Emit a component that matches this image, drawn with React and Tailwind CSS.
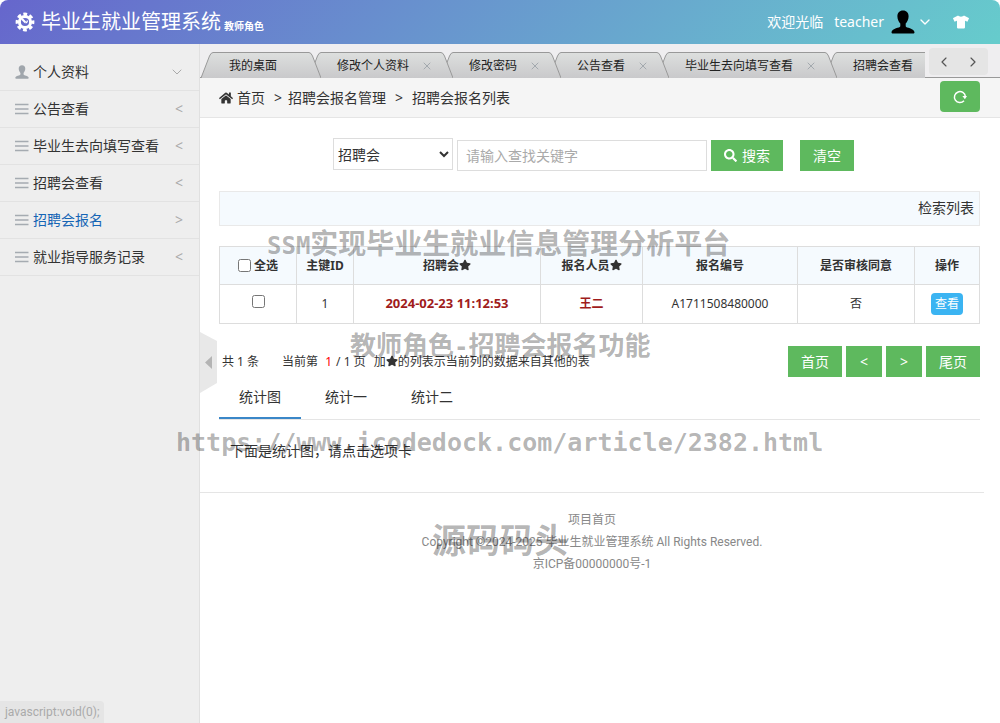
import React, { useState } from 'react';
import { FaHome, FaSearch, FaStar, FaTshirt } from 'react-icons/fa';
import { ChevronDown, ChevronLeft, ChevronRight, X } from 'lucide-react';

const MENU = ['公告查看', '毕业生去向填写查看', '招聘会查看', '招聘会报名', '就业指导服务记录'];
const TABS = ['我的桌面', '修改个人资料', '修改密码', '公告查看', '毕业生去向填写查看', '招聘会查看'];
const CHARTS = ['统计图', '统计一', '统计二'];

function GearIcon() {
  return (
    <svg width="20" height="20" viewBox="0 0 20 20" fill="none" stroke="white">
      <circle cx="10" cy="10" r="5.6" strokeWidth="3" />
      <circle cx="10" cy="10" r="7.800" strokeWidth="3.200" strokeDasharray="3.700 2.426" strokeDashoffset="1.850" />
      <path d="M6.800 6.800l3.700 3.700" strokeWidth="2" />
      <path d="M10.500 10.800a2 2 0 0 0 1.800-2.300" strokeWidth="1.300" />
    </svg>
  );
}

function PersonIcon({ className }) {
  return (
    <svg className={className} viewBox="0 0 24 24" fill="currentColor">
      <path d="M12 .5c-3.600 0-5.700 2.500-5.600 6 .1 3.200 1.400 5.300 2.900 7v2.800C8.800 18.200 1.300 18 .5 22c0 1 .5 1.500 1.500 1.500h20c1 0 1.500-.5 1.500-1.500-.8-4-8.300-3.800-8.800-5.700v-2.800c1.500-1.700 2.800-3.800 2.900-7C17.700 3 15.600.5 12 .5z" />
    </svg>
  );
}

function ListIcon() {
  return (
    <svg width="14" height="14" viewBox="0 0 14 14" stroke="#a5abb1" strokeWidth="1.500">
      <path d="M0 2.500h13.500M0 7h13.500M0 11.500h13.500" />
    </svg>
  );
}

function ReloadIcon() {
  return (
    <svg width="14" height="14" viewBox="0 0 14 14" fill="none" stroke="white" strokeWidth="1.500">
      <path d="M11 10.800A5.500 5.500 0 1 1 12.400 6.600" />
      <path d="M9.400 6h4.600l-2.100 3.200z" fill="white" stroke="none" />
    </svg>
  );
}

function Star() {
  return <FaStar className="inline size-3 align-[-1px]" />;
}

function PageTab({ label, closable, order }) {
  return (
    <li className="relative -ml-3 flex h-[26px] shrink-0 first:ml-0" style={{ zIndex: order }}>
      <svg width="12" height="26" viewBox="0 0 12 26">
        <path d="M0 26L8.500 4Q10 .5 12 .5V26z" fill="url(#tabFill)" />
        <path d="M0 26L8.500 4Q10 .5 12 .5" fill="none" stroke="#999" />
      </svg>
      <div className="flex items-center border-t border-[#999] bg-linear-to-b from-[#dddfde] to-[#c9c9cb] pl-4 text-xs text-[#222]">
        <span className="whitespace-nowrap">{label}</span>
        {closable ? (
          <button type="button" aria-label="关闭" className="mr-2 ml-3 text-[#a3a9ae]"><X size={12} strokeWidth={2} /></button>
        ) : (
          <span className="w-8" />
        )}
      </div>
      <svg width="12" height="26" viewBox="0 0 12 26">
        <path d="M0 .5Q2 .5 3.500 4L12 26H0z" fill="url(#tabFill)" />
        <path d="M0 .5Q2 .5 3.500 4L12 26" fill="none" stroke="#999" />
      </svg>
    </li>
  );
}

function Header() {
  return (
    <header className="flex h-11 items-center rounded-t-lg bg-linear-135 from-[#6666cc] to-[#66cccc] pr-[31px] pl-[15px] text-white">
      <GearIcon />
      <h1 className="ml-[6px] text-xl">毕业生就业管理系统</h1>
      <span className="mt-2 ml-[3px] text-[10px] font-bold">教师角色</span>
      <div className="ml-auto flex items-center text-sm">
        <span>欢迎光临</span>
        <a href="#user" className="ml-[11px] flex items-center">
          teacher
          <PersonIcon className="ml-[7px] size-6 text-black" />
          <ChevronDown size={16} strokeWidth={2} className="ml-[2px]" />
        </a>
        <a href="#skin" aria-label="换肤" className="ml-5"><FaTshirt size={16} /></a>
      </div>
    </header>
  );
}

function Sidebar() {
  return (
    <aside className="w-[200px] shrink-0 rounded-bl-lg border-r border-[#e0e0e0] bg-[#eee] pt-[10px] text-sm text-[#333]">
      <a href="#profile" className="flex h-[37px] items-center border-b border-[#e2e2e2] pr-[14px] pl-[15px]">
        <PersonIcon className="size-[14px] text-[#a0a6ac]" />
        <span className="ml-1">个人资料</span>
        <ChevronDown size={16} strokeWidth={1.5} className="ml-auto text-[#aaa]" />
      </a>
      {MENU.map((item) => (
        <a
          key={item}
          href="#menu"
          className={`flex h-[37px] items-center border-b border-[#e2e2e2] pr-4 pl-[15px] ${item === '招聘会报名' ? 'text-[#1565b5]' : ''}`}
        >
          <ListIcon />
          <span className="ml-1">{item}</span>
          <span className="ml-auto text-[#aaa]">{item === '招聘会报名' ? '>' : '<'}</span>
        </a>
      ))}
    </aside>
  );
}

function PageTabs() {
  return (
    <nav className="flex h-[34px] border-b border-[#999] bg-[#efeef0]">
      <ul className="mt-2 ml-px flex h-[26px] min-w-0 flex-1 overflow-hidden">
        {TABS.map((label, i) => (
          <PageTab key={label} label={label} closable={i > 0} order={TABS.length - i} />
        ))}
      </ul>
      <div className="mt-1 mr-3 ml-1 flex h-[27px] w-[59px] shrink-0 items-center justify-around rounded-sm bg-[#e5e5e5] text-[#555]">
        <button type="button" aria-label="向左"><ChevronLeft size={16} strokeWidth={1.75} /></button>
        <button type="button" aria-label="向右"><ChevronRight size={16} strokeWidth={1.75} /></button>
      </div>
    </nav>
  );
}

function Breadcrumb() {
  return (
    <div className="flex h-10 items-center border-b border-[#e5e5e5] bg-[#f5f5f5] pr-5 pl-[19px] text-sm">
      <FaHome size={14} />
      <a href="#home" className="ml-1">首页</a>
      <span className="mx-[6px] ml-[9px]">&gt;</span>
      <span>招聘会报名管理</span>
      <span className="mx-[9px]">&gt;</span>
      <span>招聘会报名列表</span>
      <button type="button" aria-label="刷新" className="mb-[2px] ml-auto flex h-[31px] w-10 items-center justify-center rounded bg-[#5eb95e]">
        <ReloadIcon />
      </button>
    </div>
  );
}

function GreenButton({ children, small }) {
  return (
    <button type="button" className={`flex h-[31px] items-center justify-center bg-[#5eb95e] text-sm text-white ${small ? 'w-9' : 'px-[13px]'}`}>
      {children}
    </button>
  );
}

function SearchBar() {
  const [keyword, setKeyword] = useState('');
  return (
    <form className="flex items-end justify-center pr-3" onSubmit={(e) => e.preventDefault()}>
      <select aria-label="查询字段" className="mb-px h-8 w-[120px] border border-[#ddd] bg-white text-sm">
        <option>招聘会</option>
      </select>
      <input
        type="text"
        aria-label="关键字"
        placeholder="请输入查找关键字"
        value={keyword}
        onChange={(e) => setKeyword(e.target.value)}
        className="mr-1 ml-1 h-[31px] w-[250px] border border-[#ddd] px-2 text-sm placeholder:text-[#aaa]"
      />
      <GreenButton><FaSearch size={13} className="mr-[5px]" />搜索</GreenButton>
      <div className="ml-[17px]"><GreenButton>清空</GreenButton></div>
    </form>
  );
}

function ResultTable() {
  return (
    <table className="mt-5 w-full table-fixed text-center text-xs [&_td]:border [&_td]:border-[#ddd] [&_th]:border [&_th]:border-[#ddd]">
      <colgroup>
        <col className="w-[77px]" />
        <col className="w-[57px]" />
        <col />
        <col className="w-[102px]" />
        <col className="w-[155px]" />
        <col className="w-[117px]" />
        <col className="w-[65px]" />
      </colgroup>
      <thead>
        <tr className="h-[38px] bg-[#f5fafe]">
          <th>
            <label className="flex items-center justify-center gap-[3px]"><input type="checkbox" className="size-[13px]" />全选</label>
          </th>
          <th>主键ID</th>
          <th>招聘会<Star /></th>
          <th>报名人员<Star /></th>
          <th>报名编号</th>
          <th>是否审核同意</th>
          <th>操作</th>
        </tr>
      </thead>
      <tbody>
        <tr className="h-[39px]">
          <td><input type="checkbox" aria-label="选择" className="mb-[6px] size-[13px] align-middle" /></td>
          <td>1</td>
          <td className="text-[13px] font-bold text-[#a01c1c]">2024-02-23 11:12:53</td>
          <td className="font-bold text-[#a01c1c]">王二</td>
          <td>A1711508480000</td>
          <td>否</td>
          <td><button type="button" className="h-[22px] rounded bg-[#3bb4f2] px-1 align-middle text-white">查看</button></td>
        </tr>
      </tbody>
    </table>
  );
}

function Pager() {
  return (
    <div className="mt-[22px] flex h-[31px] items-center text-xs">
      <span className="ml-[3px]">共 1 条</span>
      <span className="ml-[23px]">当前第 <span className="mx-1 text-[#f00]">1</span>/ 1 页</span>
      <span className="ml-2">加<Star />的列表示当前列的数据来自其他的表</span>
      <div className="ml-auto flex gap-1">
        <GreenButton>首页</GreenButton>
        <GreenButton small>&lt;</GreenButton>
        <GreenButton small>&gt;</GreenButton>
        <GreenButton>尾页</GreenButton>
      </div>
    </div>
  );
}

function ChartTabs() {
  const [active, setActive] = useState(0);
  return (
    <section>
      <div className="flex h-[43px] gap-1 border-b border-[#e5e5e5] text-sm">
        {CHARTS.map((name, i) => (
          <button
            key={name}
            type="button"
            onClick={() => setActive(i)}
            className={`border-b-2 px-5 ${i === active ? 'border-[#3a87c8]' : 'border-transparent'}`}
          >
            {name}
          </button>
        ))}
      </div>
      <p className="px-[11px] pt-[21px] text-sm">下面是统计图，请点击选项卡</p>
    </section>
  );
}

function Watermark() {
  return (
    <div className="pointer-events-none absolute inset-x-0 top-0 z-20 font-bold text-black/30">
      <p className="absolute top-[222px] left-[267px] text-[28px] leading-[42px] whitespace-nowrap">
        <span className="font-['DejaVu_Sans_Mono'] text-2xl">SSM</span>实现毕业生就业信息管理分析平台
      </p>
      <p className="absolute top-[325px] left-[350px] text-[26px] leading-[40px] whitespace-nowrap">
        教师角色<span className="font-['DejaVu_Sans_Mono'] text-2xl">-</span>招聘会报名功能
      </p>
      <p className="absolute top-[423px] left-[176px] font-['DejaVu_Sans_Mono'] text-[25px] leading-[40px] whitespace-nowrap">
        https://www.icodedock.com/article/2382.html
      </p>
      <p className="absolute top-[515px] left-[432px] text-[34px] leading-[50px] whitespace-nowrap">源码码头</p>
    </div>
  );
}

export default function App() {
  return (
    <div className="relative flex min-h-screen flex-col bg-white font-['Noto_Sans','Noto_Sans_CJK_SC',sans-serif] text-[#333]">
      <svg width="0" height="0" className="absolute">
        <linearGradient id="tabFill" x1="0" y1="0" x2="0" y2="1">
          <stop offset="0" stopColor="#dddfde" />
          <stop offset="1" stopColor="#c9c9cb" />
        </linearGradient>
      </svg>
      <Header />
      <div className="flex flex-1">
        <Sidebar />
        <main className="relative min-w-0 flex-1">
          <PageTabs />
          <Breadcrumb />
          <button type="button" aria-label="收起菜单" className="absolute top-[288px] left-0">
            <svg width="17" height="61" viewBox="0 0 17 61">
              <path d="M0 0L17 9V51L0 61z" fill="#e8e8e8" />
              <path d="M12 24V37L5 30.500z" fill="#b4b4b4" />
            </svg>
          </button>
          <div className="pt-5 pr-5 pl-[19px]">
            <SearchBar />
            <div className="mt-5 flex h-[35px] items-center justify-end border border-[#e9e9e9] bg-[#f5fafe] px-[5px] pb-[2px] text-sm">检索列表</div>
            <ResultTable />
            <Pager />
            <ChartTabs />
          </div>
          <footer className="mt-[31px] mr-4 border-t border-[#e5e5e5] pt-4 text-center font-['Roboto','Noto_Sans_CJK_SC',sans-serif] text-xs leading-[22px] text-[#888]">
            <p><a href="#home">项目首页</a></p>
            <p>Copyright ©2024-2025 毕业生就业管理系统 All Rights Reserved.</p>
            <p>京ICP备00000000号-1</p>
          </footer>
        </main>
      </div>
      <Watermark />
      <div className="fixed bottom-0 left-0 rounded-tr bg-[#e5e5e5] px-[5px] font-['Roboto',sans-serif] text-xs leading-[22px] text-[#aaa]">javascript:void(0);</div>
    </div>
  );
}
